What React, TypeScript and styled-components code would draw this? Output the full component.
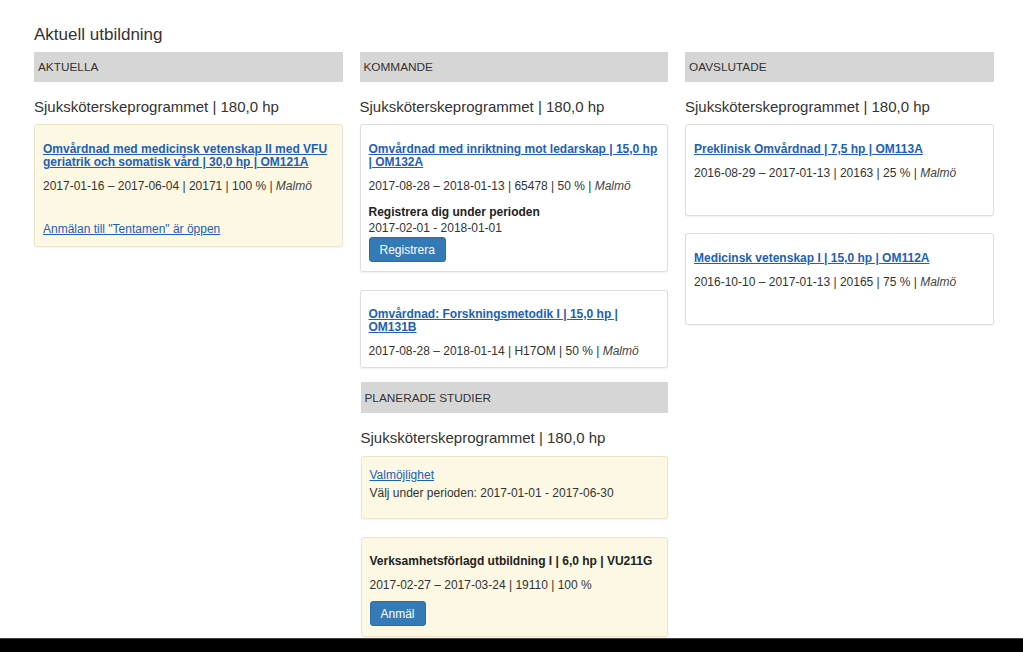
import React from 'react';
import styled, { createGlobalStyle } from 'styled-components';

const GlobalStyle = createGlobalStyle`
  html, body {
    margin: 0;
    padding: 0;
    background: #fff;
  }
  body {
    font-family: "Liberation Sans", Arial, sans-serif;
    font-size: 12px;
    color: #333;
  }
  * {
    box-sizing: border-box;
  }
`;

const Screen = styled.div`
  display: flex;
  flex-direction: column;
  height: 100vh;
  overflow: hidden;
`;

const Page = styled.main`
  flex: 1;
  overflow: hidden;
  padding: 23px 0 0 34px;
`;

const BottomBar = styled.div`
  height: 14px;
  background: #000;
  border-top: 1px solid #444;
`;

const Title = styled.h1`
  margin: 0 0 6px;
  font-size: 17px;
  font-weight: normal;
  line-height: 23px;
  color: #333;
`;

const Columns = styled.div`
  display: grid;
  grid-template-columns: repeat(3, 308.5px);
  column-gap: 17px;
  align-items: start;
`;

const Column = styled.section`
  display: flex;
  flex-direction: column;
`;

const SectionHeader = styled.div<{ $shift?: boolean; $top?: number; $height?: number }>`
  height: ${(p) => p.$height ?? 30}px;
  background: #d6d6d6;
  padding: 0 4px;
  display: flex;
  align-items: center;
  font-size: 11.8px;
  color: #333;
  text-transform: uppercase;
  margin: ${(p) => p.$top ?? 0}px 0 15px ${(p) => (p.$shift ? '1px' : '0')};
`;

const ProgramTitle = styled.h2<{ $shift?: boolean }>`
  margin: 0 0 ${(p) => (p.$shift ? 8 : 7)}px ${(p) => (p.$shift ? '1px' : '0')};
  font-size: 15px;
  font-weight: normal;
  line-height: 20px;
  color: #333;
`;

const CardList = styled.div<{ $gap: number }>`
  display: flex;
  flex-direction: column;
  gap: ${(p) => p.$gap}px;
`;

const Card = styled.div<{ $tone?: 'warning' | 'plain'; $minHeight?: number; $shift?: boolean; $pad?: string }>`
  background: ${(p) => (p.$tone === 'warning' ? '#fcf8e3' : '#fff')};
  border: 1px solid ${(p) => (p.$tone === 'warning' ? '#ebe4c8' : '#dddddd')};
  border-radius: 3px;
  box-shadow: 0 1px 2px rgba(0, 0, 0, 0.06);
  padding: ${(p) => p.$pad ?? '18px 8px 8px'};
  min-height: ${(p) => (p.$minHeight ? `${p.$minHeight}px` : 'auto')};
  margin-left: ${(p) => (p.$shift ? '1px' : '0')};
  display: flex;
  flex-direction: column;
  align-items: flex-start;
`;

const CourseLink = styled.a`
  font-weight: bold;
  font-size: 12px;
  line-height: 13px;
  color: #2160b8;
  text-decoration: underline;
  cursor: pointer;
`;

const CourseName = styled.div`
  font-weight: bold;
  font-size: 12px;
  line-height: 14px;
  color: #222;
`;

const Meta = styled.div<{ $top?: number }>`
  margin-top: ${(p) => p.$top ?? 9}px;
  line-height: 16px;
  color: #333;

  em {
    font-style: italic;
    color: #444;
  }
`;

const Notice = styled.a`
  margin-top: 28px;
  line-height: 14px;
  color: #2160b8;
  text-decoration: underline;
  cursor: pointer;
`;

const PlainLink = styled.a`
  line-height: 14px;
  color: #2160b8;
  text-decoration: underline;
  cursor: pointer;
`;

const Label = styled.div`
  margin-top: 10px;
  font-weight: bold;
  line-height: 16px;
  color: #222;
`;

const Line = styled.div`
  line-height: 16px;
  color: #333;
`;

const Button = styled.button<{ $top?: number }>`
  margin-top: ${(p) => p.$top ?? 1}px;
  height: 25px;
  padding: 0 10px;
  background: #337ab7;
  border: 1px solid #2e6da4;
  border-radius: 3px;
  color: #fff;
  font-family: "Liberation Sans", Arial, sans-serif;
  font-size: 12px;
  cursor: pointer;
`;

const Program = ({ shift }: { shift?: boolean }) => (
  <ProgramTitle $shift={shift}>Sjuksköterskeprogrammet | 180,0 hp</ProgramTitle>
);

export default function App(): JSX.Element {
  return (
    <Screen>
      <GlobalStyle />
      <Page>
        <Title>Aktuell utbildning</Title>
        <Columns>
          <Column>
            <SectionHeader>Aktuella</SectionHeader>
            <Program />
            <CardList $gap={18}>
              <Card $tone="warning" $pad="18px 8px 10px">
                <CourseLink>
                  Omvårdnad med medicinsk vetenskap II med VFU geriatrik och somatisk vård | 30,0 hp | OM121A
                </CourseLink>
                <Meta>
                  2017-01-16 – 2017-06-04 | 20171 | 100 % | <em>Malmö</em>
                </Meta>
                <Notice>Anmälan till "Tentamen" är öppen</Notice>
              </Card>
            </CardList>
          </Column>

          <Column>
            <SectionHeader>Kommande</SectionHeader>
            <Program />
            <CardList $gap={18}>
              <Card $pad="18px 8px 9px">
                <CourseLink>Omvårdnad med inriktning mot ledarskap | 15,0 hp | OM132A</CourseLink>
                <Meta>
                  2017-08-28 – 2018-01-13 | 65478 | 50 % | <em>Malmö</em>
                </Meta>
                <Label>Registrera dig under perioden</Label>
                <Line>2017-02-01 - 2018-01-01</Line>
                <Button>Registrera</Button>
              </Card>
              <Card $pad="17px 8px 8px">
                <CourseLink>Omvårdnad: Forskningsmetodik I | 15,0 hp | OM131B</CourseLink>
                <Meta>
                  2017-08-28 – 2018-01-14 | H17OM | 50 % | <em>Malmö</em>
                </Meta>
              </Card>
            </CardList>
            <SectionHeader $shift $top={14} $height={31}>
              Planerade studier
            </SectionHeader>
            <Program shift />
            <CardList $gap={18}>
              <Card $tone="warning" $shift $pad="11px 8px 17px">
                <PlainLink>Valmöjlighet</PlainLink>
                <Meta $top={3}>Välj under perioden: 2017-01-01 - 2017-06-30</Meta>
              </Card>
              <Card $tone="warning" $shift $pad="16px 8px 10px">
                <CourseName>Verksamhetsförlagd utbildning I | 6,0 hp | VU211G</CourseName>
                <Meta>2017-02-27 – 2017-03-24 | 19110 | 100 %</Meta>
                <Button $top={8}>Anmäl</Button>
              </Card>
            </CardList>
          </Column>

          <Column>
            <SectionHeader>Oavslutade</SectionHeader>
            <Program />
            <CardList $gap={17}>
              <Card $minHeight={92}>
                <CourseLink>Preklinisk Omvårdnad | 7,5 hp | OM113A</CourseLink>
                <Meta>
                  2016-08-29 – 2017-01-13 | 20163 | 25 % | <em>Malmö</em>
                </Meta>
              </Card>
              <Card $minHeight={92}>
                <CourseLink>Medicinsk vetenskap I | 15,0 hp | OM112A</CourseLink>
                <Meta>
                  2016-10-10 – 2017-01-13 | 20165 | 75 % | <em>Malmö</em>
                </Meta>
              </Card>
            </CardList>
          </Column>
        </Columns>
      </Page>
      <BottomBar />
    </Screen>
  );
}
